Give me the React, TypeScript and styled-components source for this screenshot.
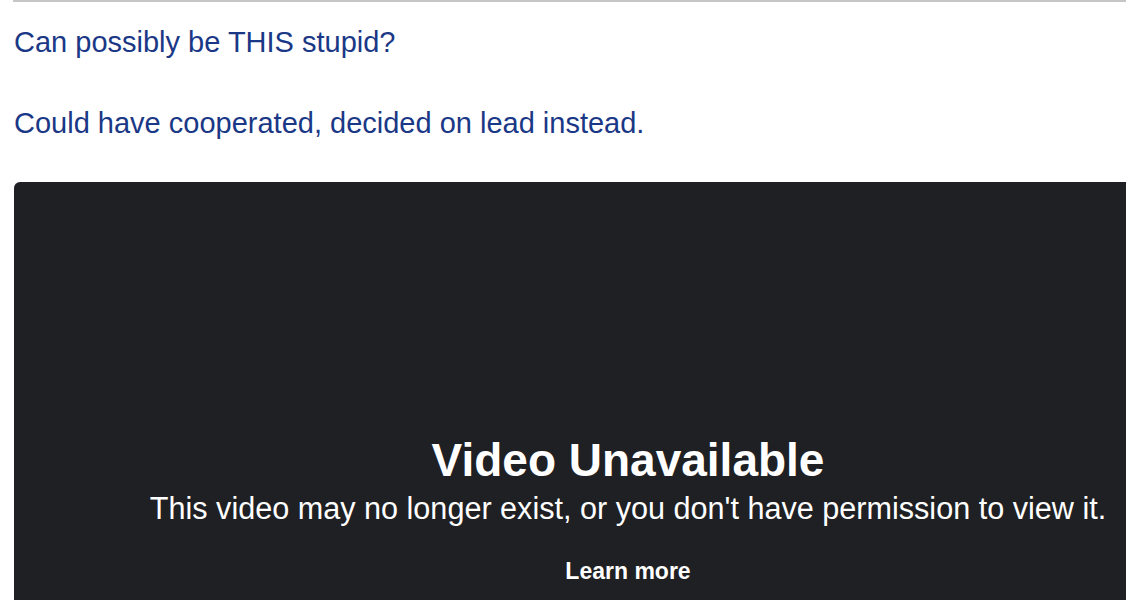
import React from "react";
import styled, { createGlobalStyle } from "styled-components";

const Global = createGlobalStyle`
  html, body { margin: 0; padding: 0; background: #ffffff; }
  body { font-family: "Liberation Sans", Arial, Helvetica, sans-serif; overflow: hidden; }
`;

const Page = styled.div`
  width: 1126px;
  height: 600px;
  overflow: hidden;
`;

const Rule = styled.div`
  margin-left: 13px;
  border-top: 2px solid #c6c6c6;
`;

const Content = styled.div`
  padding: 24px 0 0 14px;
`;

const Para = styled.p`
  margin: 0 0 48px 0;
  font-size: 29px;
  line-height: 33px;
  color: #1a3886;
  white-space: nowrap;
`;

const Video = styled.div`
  margin-top: -6px;
  width: 1228px;
  height: 691px;
  background: #1f2023;
  border-radius: 6px;
  display: flex;
  flex-direction: column;
  align-items: center;
  padding-top: 252px;
  box-sizing: border-box;
  color: #ffffff;
`;

const Title = styled.div`
  font-size: 46px;
  line-height: 52px;
  font-weight: 700;
  white-space: nowrap;
`;

const Sub = styled.div`
  margin-top: 5px;
  font-size: 30.6px;
  line-height: 34px;
  white-space: nowrap;
`;

const Learn = styled.a`
  margin-top: 33px;
  font-size: 23px;
  line-height: 26px;
  font-weight: 700;
  color: #ffffff;
  text-decoration: none;
  cursor: pointer;
`;

export default function App() {
  return (
    <Page>
      <Global />
      <Rule />
      <Content>
        <Para>Can possibly be THIS stupid?</Para>
        <Para>Could have cooperated, decided on lead instead.</Para>
        <Video>
          <Title>Video Unavailable</Title>
          <Sub>This video may no longer exist, or you don't have permission to view it.</Sub>
          <Learn>Learn more</Learn>
        </Video>
      </Content>
    </Page>
  );
}
